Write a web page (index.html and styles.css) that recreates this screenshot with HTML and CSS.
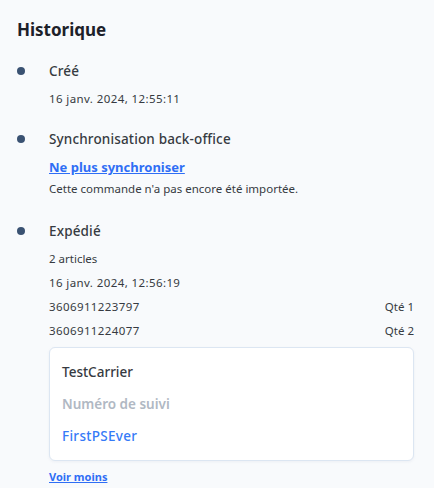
FILE: index.html
```html
<!DOCTYPE html>
<html lang="fr">
<head>
<meta charset="utf-8">
<link rel="stylesheet" href="styles.css">
</head>
<body>
<section class="history">
  <h2 class="title">Historique</h2>
  <ul class="timeline">
    <li class="event">
      <span class="dot"></span>
      <div class="content">
        <div class="event-title">Créé</div>
        <div class="line first num">16 janv. 2024, 12:55:11</div>
      </div>
    </li>
    <li class="event">
      <span class="dot"></span>
      <div class="content">
        <div class="event-title">Synchronisation back-office</div>
        <a class="link-big" href="#">Ne plus synchroniser</a>
        <div class="line note">Cette commande n'a pas encore été importée.</div>
      </div>
    </li>
    <li class="event">
      <span class="dot"></span>
      <div class="content">
        <div class="event-title">Expédié</div>
        <div class="line first">2 articles</div>
        <div class="line num">16 janv. 2024, 12:56:19</div>
        <div class="line row"><span class="num">3606911223797</span><span>Qté 1</span></div>
        <div class="line row"><span class="num">3606911224077</span><span>Qté 2</span></div>
        <div class="card">
          <div class="carrier">TestCarrier</div>
          <div class="tracking-label">Numéro de suivi</div>
          <div class="tracking">FirstPSEver</div>
        </div>
        <a class="link-small" href="#">Voir moins</a>
      </div>
    </li>
  </ul>
</section>
</body>
</html>
```
FILE: styles.css
```css
* { box-sizing: border-box; }
html, body { margin: 0; padding: 0; }
body {
  background: #f8fafc;
  font-family: "Noto Sans", "Open Sans", sans-serif;
  color: #363a41;
}
.history { padding: 18px 20px 0 17px; }
.title {
  margin: 0;
  font-size: 17px;
  font-weight: 700;
  color: #1d2129;
  line-height: 24px;
}
.timeline { list-style: none; margin: 19px 0 0; padding: 0; }
.event { display: flex; margin-bottom: 22px; }
.event:nth-child(2) { margin-bottom: 24px; }
.dot {
  width: 8px; height: 8px; border-radius: 50%;
  background: #3a5272;
  margin: 6px 24px 0 0;
  flex: none;
}
.content { flex: 1; display: flex; flex-direction: column; align-items: flex-start; }
.event-title { font-size: 13.5px; font-weight: 500; line-height: 20px; color: #363a41; letter-spacing: 0.15px; }
.line { font-size: 11.5px; line-height: 16px; margin-top: 8px; color: #363a41; }
.line.first { margin-top: 10px; }
.num { letter-spacing: 0.4px; }
.row { display: flex; justify-content: space-between; align-self: stretch; }
.link-big {
  font-size: 13px; font-weight: 700; color: #2f6ef5; line-height: 20px; margin-top: 8px;
}
.line.note { margin-top: 4px; }
.card {
  align-self: stretch;
  margin-top: 8px;
  background: #fff;
  border: 1px solid #dce6f2;
  border-radius: 6px;
  padding: 14px 12px;
  box-shadow: 0 1px 3px rgba(100,120,150,0.08);
}
.card div { font-size: 13.5px; line-height: 20px; margin-bottom: 12px; }
.card div:last-child { margin-bottom: 0; }
.carrier { font-weight: 500; color: #363a41; }
.tracking-label { font-weight: 600; color: #b0b8c3; }
.tracking { font-weight: 500; color: #357af7; letter-spacing: 0.3px; }
.link-small { font-size: 11px; font-weight: 700; color: #2f6ef5; margin-top: 9px; line-height: 14px; }
```
